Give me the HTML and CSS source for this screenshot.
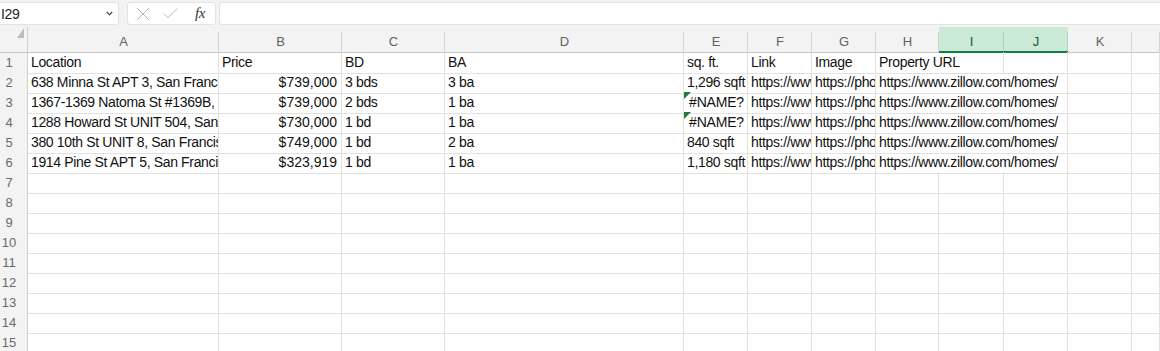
FILE: index.html
```html
<!DOCTYPE html>
<html lang="en">
<head>
  <meta charset="UTF-8" />
  <title>Listings - Excel</title>
  <link rel="stylesheet" href="styles.css">
</head>
<body>
  <div class="formula-bar">
    <div class="name-box">
      <span>I29</span>
      <svg width="7" height="5" viewBox="0 0 7 5"><path d="M0.8 1 L3.5 3.8 L6.2 1" fill="none" stroke="#333" stroke-width="1.1"/></svg>
    </div>
    <div class="fx-box">
      <svg width="14" height="14" viewBox="0 0 14 14"><path d="M1 1 L13 13 M13 1 L1 13" stroke="#b4b4b4" stroke-width="1"/></svg>
      <svg width="15" height="11" viewBox="0 0 15 11"><path d="M0.8 5.5 L5 9.8 L14.2 0.6" fill="none" stroke="#b4b4b4" stroke-width="1"/></svg>
      <span class="fx">fx</span>
    </div>
    <div class="formula-input"></div>
  </div>

  <div class="sheet">
    <div class="row colhead">
      <div class="hc corner"></div>
      <div class="hc">A</div><div class="hc">B</div><div class="hc">C</div><div class="hc">D</div>
      <div class="hc">E</div><div class="hc">F</div><div class="hc">G</div><div class="hc">H</div>
      <div class="hc sel">I</div><div class="hc sel">J</div><div class="hc">K</div><div class="hc"></div>
    </div>

    <div class="row">
      <div class="rh">1</div>
      <div class="c">Location</div><div class="c">Price</div><div class="c">BD</div><div class="c">BA</div>
      <div class="c">sq. ft.</div><div class="c">Link</div><div class="c">Image</div>
      <div class="c span2">Property URL</div><div class="c"></div><div class="c"></div><div class="c"></div>
    </div>
    <div class="row">
      <div class="rh">2</div>
      <div class="c">638 Minna St APT 3, San Francisco, CA 94103</div><div class="c num">$739,000</div><div class="c">3 bds</div><div class="c">3 ba</div>
      <div class="c">1,296 sqft</div><div class="c">https://www.zillow.com/homedetails/</div><div class="c">https://photos.zillowstatic.com/</div>
      <div class="c span3">https://www.zillow.com/homes/</div><div class="c"></div><div class="c"></div>
    </div>
    <div class="row">
      <div class="rh">3</div>
      <div class="c">1367-1369 Natoma St #1369B, San Francisco, CA 94103</div><div class="c num">$739,000</div><div class="c">2 bds</div><div class="c">1 ba</div>
      <div class="c err">#NAME?</div><div class="c">https://www.zillow.com/homedetails/</div><div class="c">https://photos.zillowstatic.com/</div>
      <div class="c span3">https://www.zillow.com/homes/</div><div class="c"></div><div class="c"></div>
    </div>
    <div class="row">
      <div class="rh">4</div>
      <div class="c">1288 Howard St UNIT 504, San Francisco, CA 94103</div><div class="c num">$730,000</div><div class="c">1 bd</div><div class="c">1 ba</div>
      <div class="c err">#NAME?</div><div class="c">https://www.zillow.com/homedetails/</div><div class="c">https://photos.zillowstatic.com/</div>
      <div class="c span3">https://www.zillow.com/homes/</div><div class="c"></div><div class="c"></div>
    </div>
    <div class="row">
      <div class="rh">5</div>
      <div class="c">380 10th St UNIT 8, San Francisco, CA 94103</div><div class="c num">$749,000</div><div class="c">1 bd</div><div class="c">2 ba</div>
      <div class="c">840 sqft</div><div class="c">https://www.zillow.com/homedetails/</div><div class="c">https://photos.zillowstatic.com/</div>
      <div class="c span3">https://www.zillow.com/homes/</div><div class="c"></div><div class="c"></div>
    </div>
    <div class="row">
      <div class="rh">6</div>
      <div class="c">1914 Pine St APT 5, San Francisco, CA 94109</div><div class="c num">$323,919</div><div class="c">1 bd</div><div class="c">1 ba</div>
      <div class="c">1,180 sqft</div><div class="c">https://www.zillow.com/homedetails/</div><div class="c">https://photos.zillowstatic.com/</div>
      <div class="c span3">https://www.zillow.com/homes/</div><div class="c"></div><div class="c"></div>
    </div>

    <div class="row"><div class="rh">7</div><div class="c"></div><div class="c"></div><div class="c"></div><div class="c"></div><div class="c"></div><div class="c"></div><div class="c"></div><div class="c"></div><div class="c"></div><div class="c"></div><div class="c"></div><div class="c"></div></div>
    <div class="row"><div class="rh">8</div><div class="c"></div><div class="c"></div><div class="c"></div><div class="c"></div><div class="c"></div><div class="c"></div><div class="c"></div><div class="c"></div><div class="c"></div><div class="c"></div><div class="c"></div><div class="c"></div></div>
    <div class="row"><div class="rh">9</div><div class="c"></div><div class="c"></div><div class="c"></div><div class="c"></div><div class="c"></div><div class="c"></div><div class="c"></div><div class="c"></div><div class="c"></div><div class="c"></div><div class="c"></div><div class="c"></div></div>
    <div class="row"><div class="rh">10</div><div class="c"></div><div class="c"></div><div class="c"></div><div class="c"></div><div class="c"></div><div class="c"></div><div class="c"></div><div class="c"></div><div class="c"></div><div class="c"></div><div class="c"></div><div class="c"></div></div>
    <div class="row"><div class="rh">11</div><div class="c"></div><div class="c"></div><div class="c"></div><div class="c"></div><div class="c"></div><div class="c"></div><div class="c"></div><div class="c"></div><div class="c"></div><div class="c"></div><div class="c"></div><div class="c"></div></div>
    <div class="row"><div class="rh">12</div><div class="c"></div><div class="c"></div><div class="c"></div><div class="c"></div><div class="c"></div><div class="c"></div><div class="c"></div><div class="c"></div><div class="c"></div><div class="c"></div><div class="c"></div><div class="c"></div></div>
    <div class="row"><div class="rh">13</div><div class="c"></div><div class="c"></div><div class="c"></div><div class="c"></div><div class="c"></div><div class="c"></div><div class="c"></div><div class="c"></div><div class="c"></div><div class="c"></div><div class="c"></div><div class="c"></div></div>
    <div class="row"><div class="rh">14</div><div class="c"></div><div class="c"></div><div class="c"></div><div class="c"></div><div class="c"></div><div class="c"></div><div class="c"></div><div class="c"></div><div class="c"></div><div class="c"></div><div class="c"></div><div class="c"></div></div>
    <div class="row"><div class="rh">15</div><div class="c"></div><div class="c"></div><div class="c"></div><div class="c"></div><div class="c"></div><div class="c"></div><div class="c"></div><div class="c"></div><div class="c"></div><div class="c"></div><div class="c"></div><div class="c"></div></div>
  </div>
</body>
</html>
```

FILE: styles.css
```css
*,*::before,*::after{box-sizing:border-box}
:root{
  --chrome:#f3f3f3;--grid:#e1e1e1;--head-line:#d2d2d2;
  --green:#107c41;--green-bg:#caead6;
}
body{margin:0;font-family:'Liberation Sans',Arial,sans-serif;color:#000;background:#fff;overflow:hidden}

/* formula bar */
.formula-bar{display:flex;align-items:flex-start;height:27px;background:var(--chrome);padding-top:2px}
.name-box{width:119px;height:23px;display:flex;align-items:center;justify-content:space-between;padding:0 5px 0 1px;background:#fff;border:1px solid #e3e3e3;border-left:none;border-radius:0 3px 3px 0;font-size:14px;letter-spacing:-.3px;color:#222}
.fx-box{width:89px;height:23px;margin-left:8px;display:flex;align-items:center;padding-left:8px;gap:13px;background:#fff;border:1px solid #e3e3e3;border-radius:3px}
.fx-box svg:first-child{margin-top:1px}
.fx{font-family:'Liberation Serif',serif;font-style:italic;font-size:15px;color:#333;margin-left:4px;letter-spacing:-.5px}
.formula-input{flex:1;height:23px;margin-left:3px;background:#fff;border:1px solid #e3e3e3;border-right:none;border-radius:3px 0 0 3px}

/* sheet */
.row{display:grid;grid-template-columns:28px 191px 123px 103px 239px 64px 64px 64px 63px 65px 64px 64px 1fr;height:20px}
.c{border-right:1px solid var(--grid);border-bottom:1px solid var(--grid);padding:0 3px;font-size:14px;letter-spacing:-.35px;line-height:21px;color:#111;white-space:nowrap;overflow:hidden;position:relative}
.c.num{text-align:right;padding-right:4px;letter-spacing:0}
.c.err{text-align:center;padding:0 0 0 2px;letter-spacing:-.2px}
.c.err::before{content:"";position:absolute;left:0;top:0;border-top:7px solid #1e7b3b;border-right:7px solid transparent}
.span2{grid-column:span 2}
.span3{grid-column:span 3}
.rh{background:var(--chrome);border-right:1px solid #cfcfcf;border-bottom:1px solid #dcdcdc;padding-right:9px;text-align:center;font-size:13px;line-height:21px;color:#6a6a6a}

.colhead{height:25px;background:var(--chrome)}
.hc{position:relative;border-bottom:1px solid #c4c4c4;padding-top:5px;text-align:center;font-size:13px;line-height:19px;color:#616161}
.hc::after{content:"";position:absolute;right:0;top:5px;bottom:0;width:1px;background:var(--head-line)}
.hc.corner::after{top:0;background:#cfcfcf}
.hc.corner::before{content:"";position:absolute;right:4px;top:1px;border-left:7px solid transparent;border-bottom:10px solid #bcbcbc}
.hc.sel{background:var(--green-bg);border-bottom:2px solid var(--green);color:#0e5a2e}
.hc.sel::after{background:#a9d6b9}
```
